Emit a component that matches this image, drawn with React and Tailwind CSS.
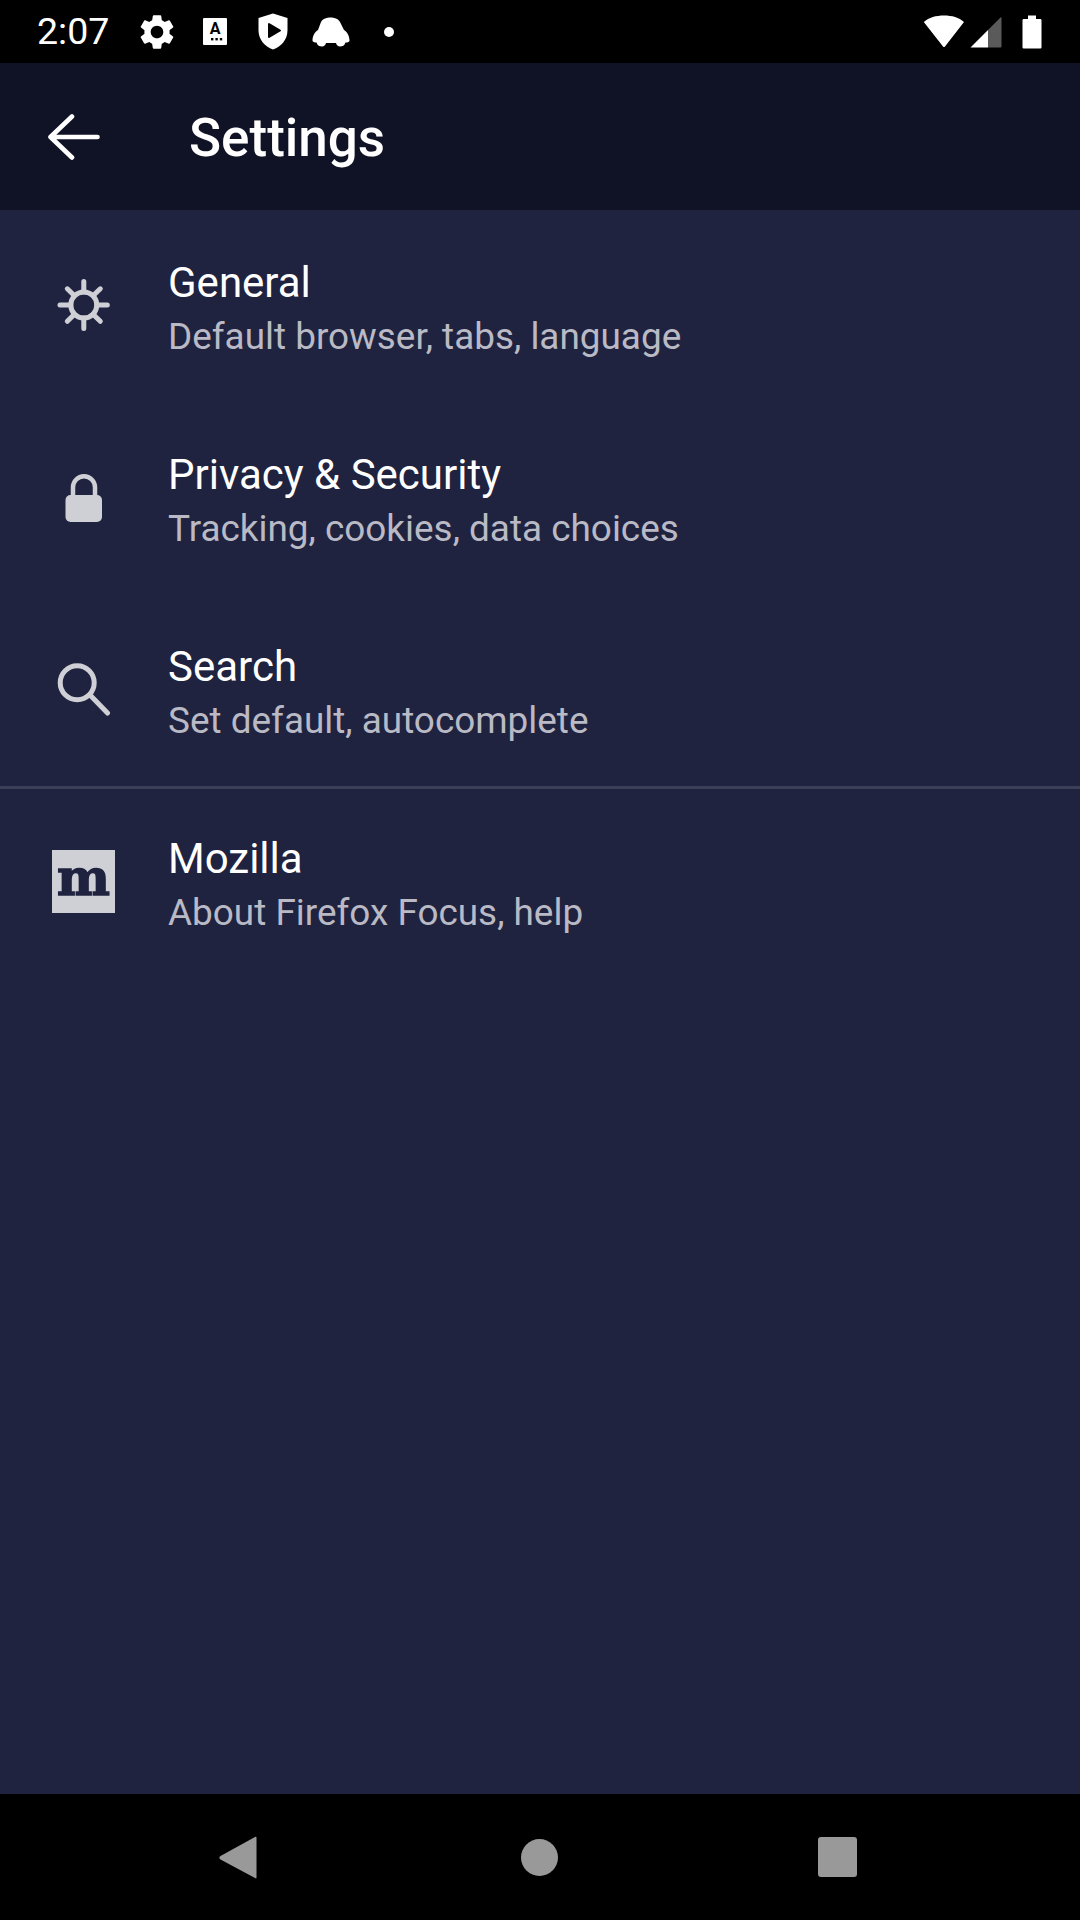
const items = [
  { t: "General", s: "Default browser, tabs, language", i: "gear" },
  { t: "Privacy & Security", s: "Tracking, cookies, data choices", i: "lock" },
  { t: "Search", s: "Set default, autocomplete", i: "search" },
  { t: "Mozilla", s: "About Firefox Focus, help", i: "moz" },
];

function Icon({ k }) {
  if (k === "gear")
    return (
      <svg width="54" height="54" viewBox="0 0 54 54" fill="none" stroke="#cfd0d6" strokeWidth="5" strokeLinecap="round">
        <circle cx="26.800" cy="26" r="13" />
        <path d="M26.800 2.500V13M26.800 39V49.500M3 26H13.800M39.800 26H50.300M10.300 9.800L17.500 16.800M36 35.200L43.300 42.300M43.300 9.800L36 16.800M17.500 35.200L10.300 42.300" />
      </svg>
    );
  if (k === "lock")
    return (
      <svg width="54" height="54" viewBox="0 0 54 54">
        <path d="M16 27V16.250a11 11 0 0 1 22 0V27" fill="none" stroke="#cfd0d6" strokeWidth="4.500" />
        <rect x="8.500" y="24" width="36.500" height="27" rx="5" fill="#cfd0d6" />
      </svg>
    );
  if (k === "search")
    return (
      <svg width="54" height="54" viewBox="0 0 54 54" fill="none" stroke="#cfd0d6" strokeWidth="5" strokeLinecap="round">
        <circle cx="20.200" cy="19.800" r="17" />
        <path d="M33 32L50.500 50" />
      </svg>
    );
  return (
    <div className="-mt-[1px] w-[63px] h-[63px] bg-[#cfd0d6] flex items-center justify-center">
      <span className="font-['DejaVu_Serif',serif] font-bold text-[50px] leading-[50px] text-[#20233f] [-webkit-text-stroke:1.5px_#20233f] -mt-[7px]">m</span>
    </div>
  );
}

export default function App() {
  return (
    <div className="w-[1080px] h-[1920px] flex flex-col bg-[#20233f] font-['Roboto',sans-serif] overflow-hidden">
      <div className="h-[63px] bg-black flex items-center text-white">
        <span className="ml-[37px] text-[37.500px] leading-none w-[75px]">2:07</span>
        <svg className="ml-[24px]" width="42" height="42" viewBox="0 0 24 24" fill="#fff">
          <path d="M19.140 12.940c.04-.3.06-.61.06-.94 0-.32-.02-.64-.07-.94l2.030-1.580a.49.49 0 0 0 .12-.61l-1.920-3.320a.488.488 0 0 0-.59-.22l-2.390.96c-.5-.38-1.030-.7-1.620-.94l-.36-2.540a.484.484 0 0 0-.48-.41h-3.840c-.24 0-.43.17-.47.41l-.36 2.540c-.59.24-1.130.57-1.620.94l-2.390-.96c-.22-.08-.47 0-.59.22L2.740 8.870c-.12.21-.08.47.12.61l2.030 1.580c-.05.3-.09.63-.09.94s.02.64.07.94l-2.030 1.580a.49.49 0 0 0-.12.61l1.920 3.320c.12.22.37.29.59.22l2.390-.96c.5.38 1.030.7 1.620.94l.36 2.540c.05.24.24.41.48.41h3.840c.24 0 .44-.17.47-.41l.36-2.540c.59-.24 1.130-.56 1.620-.94l2.390.96c.22.08.47 0 .59-.22l1.920-3.320c.12-.22.07-.47-.12-.61l-2.010-1.580zM12 15.600c-1.980 0-3.600-1.620-3.600-3.600s1.620-3.600 3.600-3.600 3.600 1.620 3.600 3.600-1.620 3.600-3.600 3.600z" />
        </svg>
        <div className="ml-[25px] w-[24px] h-[27px] bg-white rounded-[1px] flex flex-col items-center text-black">
          <span className="text-[16px] leading-[15px] font-bold mt-[3px]">A</span>
          <svg width="12" height="3" viewBox="0 0 12 3" fill="#000" className="ml-[4px] mt-[2px]"><rect x="0" y="0" width="2.400" height="2.400" /><rect x="4.400" y="0" width="2.400" height="2.400" /><rect x="8.800" y="0" width="2.400" height="2.400" /></svg>
        </div>
        <svg className="ml-[31px]" width="30" height="37" viewBox="0 0 30 37">
          <path d="M15 0.500L29.500 5V17C29.500 26.500 23.500 33.500 15 36.500C6.500 33.500 0.500 26.500 0.500 17V5Z" fill="#fff" />
          <path d="M11 11V24L22 17.500Z" fill="#000" stroke="#000" strokeWidth="2" strokeLinejoin="round" />
        </svg>
        <svg className="ml-[24px]" width="38" height="30" viewBox="0 0 38 30" fill="#fff">
          <path d="M18.500 .5C22 .5 26 1.500 28 5L32 13C35 14.500 37.500 19 37.500 23.500C37.500 25 36 25.500 33.500 25.500C32.500 28.500 30.500 29.500 28 29.500C26 29.500 24.500 28 24 26H14C13.500 28 12 29.500 10 29.500C7.500 29.500 5.500 28.500 4.500 25.500C2.500 25.500 .5 25 .5 23.500C.5 19 3 14.500 6 13L9 5C11 1.500 15 .5 18.500 .5Z" />
        </svg>
        <div className="ml-[34px] w-[10px] h-[10px] rounded-full bg-white" />
        <div className="flex-1" />
        <svg width="42" height="33" viewBox="0 0 42 33" className="mr-[5px]">
          <path d="M21 .5C29 .5 36 2.500 41 7L22 31.500C21.400 32.300 20.600 32.300 20 31.500L.8 7C6 2.500 13 .5 21 .5Z" fill="#fff" />
        </svg>
        <svg width="32" height="32" viewBox="0 0 32 32" className="mr-[20px]">
          <path d="M0.500 31.500L18 14V31.500Z" fill="#fff" />
          <path d="M18 14L30.500 1.500C31 1 31.500 1.300 31.500 2V30C31.500 31 31 31.500 30 31.500H18Z" fill="#5a5a5a" />
        </svg>
        <svg width="20" height="34" viewBox="0 0 20 34" className="mr-[38px]">
          <path d="M6 .5H14V4H18C19 4 19.500 4.500 19.500 5.500V32C19.500 33 19 33.500 18 33.500H2C1 33.500 .5 33 .5 32V5.500C.5 4.500 1 4 2 4H6Z" fill="#fff" />
        </svg>
      </div>

      <div className="h-[147px] bg-[#101226] flex items-center text-white">
        <svg className="ml-[48px]" width="52" height="46" viewBox="0 0 52 46" fill="none" stroke="#fff" strokeWidth="4.600" strokeLinecap="round" strokeLinejoin="round">
          <path d="M24 2.500L2.500 23L24 43.500M2.500 23H49.500" />
        </svg>
        <span className="ml-[89px] mt-[4px] text-[53px] font-medium leading-none">Settings</span>
      </div>

      <div className="flex-1 flex flex-col">
        {items.map((it, n) => (
          <div key={it.t}>
            {n === 3 && <div className="h-[3px] -mb-[3px] bg-[#3c3f58]" />}
            <div className="h-[192px] flex items-center">
              <div className="w-[168px] flex justify-center pr-[1px]"><Icon k={it.i} /></div>
              <div className="flex flex-col pt-[7px]">
                <span className="text-[42px] leading-[53px] text-white">{it.t}</span>
                <span className="text-[36.900px] leading-[55px] text-[#b9bac5]">{it.s}</span>
              </div>
            </div>
          </div>
        ))}
      </div>

      <div className="h-[126px] bg-black flex items-center">
        <svg className="ml-[219px]" width="38" height="43" viewBox="0 0 38 43"><path d="M36 1C37 .3 37.500 .7 37.500 1.500V41.500C37.500 42.500 37 42.800 36 42L1.500 23.500C0 22.500 0 21 1.500 20Z" fill="#999" /></svg>
        <div className="ml-[264px] w-[37px] h-[37px] rounded-full bg-[#999]" />
        <div className="ml-[260px] w-[39px] h-[40px] rounded-[3px] bg-[#999]" />
      </div>
    </div>
  );
}
